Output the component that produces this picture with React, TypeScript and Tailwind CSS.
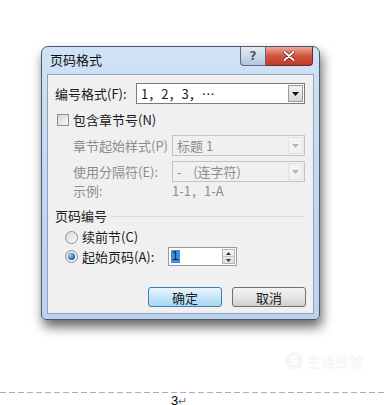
import React from "react";

const cjk = { fontFamily: '"Noto Sans CJK SC", "Noto Sans", sans-serif' };

function DropArrow({ disabled }: { disabled?: boolean }) {
  return (
    <div
      className={
        "ml-auto mr-[1px] flex h-[17px] w-[15px] items-center justify-center border " +
        (disabled
          ? "border-[#e3e3e3] bg-[#f3f3f3]"
          : "border-[#9a9a9a] bg-gradient-to-b from-[#f4f4f4] to-[#d6d6d6]")
      }
    >
      <svg width="7" height="4" viewBox="0 0 7 4">
        <path d="M0 0h7L3.5 4z" fill={disabled ? "#b5b5b5" : "#111"} />
      </svg>
    </div>
  );
}

function Radio({ checked }: { checked?: boolean }) {
  return (
    <div className="flex h-[13px] w-[13px] items-center justify-center rounded-full border border-[#8e8f8f] bg-gradient-to-br from-[#d8d8d8] to-[#fbfbfb]">
      {checked && (
        <div className="h-[7px] w-[7px] rounded-full bg-[radial-gradient(circle_at_35%_35%,#9fd0f7,#1d5ea8_70%)]" />
      )}
    </div>
  );
}

export default function App() {
  return (
    <div
      className="relative h-[405px] w-[385px] overflow-hidden bg-white text-[13px] text-[#1a1a1a]"
      style={cjk}
    >
      <div className="pl-[41px] pt-[46px]">
        {/* dialog frame */}
        <div className="h-[274px] w-[279px] rounded-t-[7px] rounded-b-[5px] border border-[#4d5a6a] bg-gradient-to-b from-[#cfe2f6] via-[#c3d8f0] to-[#bcd3ee] shadow-[2px_7px_12px_rgba(0,0,0,0.6)]">
          {/* title bar */}
          <div className="flex h-[27px] items-start">
            <span className="pl-[8px] pt-[5px] text-[13px] leading-[16px] text-[#111]">页码格式</span>
            <div className="ml-auto mr-[6px] flex">
              <div className="flex h-[19px] w-[26px] items-center justify-center rounded-bl-[4px] border border-t-0 border-[#5a6a80] bg-gradient-to-b from-[#e4ecf5] to-[#b3c6dc] text-[12px] font-bold leading-none text-[#4a5a70]" style={{ fontFamily: '"DejaVu Sans", sans-serif' }}>
                ?
              </div>
              <div className="flex h-[19px] w-[47px] items-center justify-center rounded-br-[4px] border border-l-0 border-t-0 border-[#6b2a22] bg-gradient-to-b from-[#e9a899] via-[#d2533f] to-[#c23a26]">
                <svg width="12" height="10" viewBox="0 0 12 10">
                  <path d="M1.5 1 10.5 9M10.5 1 1.5 9" stroke="#5a1a12" strokeWidth="3.4" strokeLinecap="round" />
                  <path d="M1.5 1 10.5 9M10.5 1 1.5 9" stroke="#fff" strokeWidth="2" strokeLinecap="round" />
                </svg>
              </div>
            </div>
          </div>

          {/* client panel */}
          <div className="mx-[5px] h-[240px] border border-[#8ea3bd] bg-[#f0f0f0] px-[7px] pt-[8px] leading-[16px]">
            {/* number format */}
            <div className="flex h-[21px] items-center">
              <span className="w-[81px]">编号格式(F):</span>
              <div className="flex h-[21px] w-[169px] items-center border border-[#7b7b7b] bg-white pl-[4px]">
                <span>1，2，3，…</span>
                <DropArrow />
              </div>
            </div>

            {/* include chapter */}
            <div className="mt-[9px] flex h-[13px] items-center pl-[2px]">
              <div className="h-[12px] w-[12px] border border-[#8e8f8f] bg-gradient-to-br from-[#d4d4d4] to-[#f7f7f7]" />
              <span className="ml-[4px]">包含章节号(N)</span>
            </div>

            {/* chapter style */}
            <div className="mt-[9px] flex h-[21px] items-center pl-[18px] text-[#8d8d8d]">
              <span className="w-[99px]">章节起始样式(P)</span>
              <div className="flex h-[21px] w-[133px] items-center border border-[#c4c4c4] bg-[#f0f0f0] pl-[4px]">
                <span>标题 1</span>
                <DropArrow disabled />
              </div>
            </div>

            {/* separator */}
            <div className="mt-[5px] flex h-[21px] items-center pl-[18px] text-[#8d8d8d]">
              <span className="w-[99px]">使用分隔符(E):</span>
              <div className="flex h-[21px] w-[133px] items-center border border-[#c4c4c4] bg-[#f0f0f0] pl-[4px]">
                <span className="whitespace-pre">-    (连字符)</span>
                <DropArrow disabled />
              </div>
            </div>

            {/* example */}
            <div className="mt-[2px] flex h-[14px] items-center pl-[18px] text-[#8d8d8d]">
              <span className="w-[99px]">示例:</span>
              <span>1-1，1-A</span>
            </div>

            {/* group header */}
            <div className="mt-[11px] flex h-[14px] items-center">
              <span>页码编号</span>
              <div className="ml-[4px] mr-[1px] h-px flex-1 bg-[#dcdcdc]" />
            </div>

            {/* continue */}
            <div className="mt-[6px] flex h-[16px] items-center pl-[10px]">
              <Radio />
              <span className="ml-[4px]">续前节(C)</span>
            </div>

            {/* start at */}
            <div className="mt-[2px] flex h-[19px] items-center pl-[10px]">
              <Radio checked />
              <span className="ml-[4px] w-[86px]">起始页码(A):</span>
              <div className="flex h-[19px] w-[69px] items-center border border-[#9a9a9a] bg-white pl-[2px]">
                <span className="bg-[#3f8ee6] px-[1px] text-[12px] leading-[13px] text-[#0b1c3c]" style={{ fontFamily: '"Liberation Sans", sans-serif' }}>
                  1
                </span>
                <div className="ml-auto mr-[1px] flex h-[15px] w-[13px] flex-col border border-[#b5b5b5] bg-gradient-to-b from-[#f7f7f7] to-[#dcdcdc]">
                  <div className="flex h-[7px] items-center justify-center border-b border-[#c8c8c8]">
                    <svg width="5" height="3" viewBox="0 0 5 3">
                      <path d="M0 3h5L2.5 0z" fill="#333" />
                    </svg>
                  </div>
                  <div className="flex flex-1 items-center justify-center">
                    <svg width="5" height="3" viewBox="0 0 5 3">
                      <path d="M0 0h5L2.5 3z" fill="#333" />
                    </svg>
                  </div>
                </div>
              </div>
            </div>

            {/* buttons */}
            <div className="mt-[21px] flex justify-end gap-[10px]">
              <button className="flex h-[20px] w-[74px] items-center justify-center rounded-[3px] border border-[#3c7fb1] bg-gradient-to-b from-[#eaf6fd] via-[#c6e6f9] to-[#a7d8f4] text-[13px] leading-none">
                确定
              </button>
              <button className="flex h-[20px] w-[74px] items-center justify-center rounded-[3px] border border-[#707070] bg-gradient-to-b from-[#f4f4f4] via-[#e6e6e6] to-[#cfcfcf] text-[13px] leading-none">
                取消
              </button>
            </div>
          </div>
        </div>
      </div>

      {/* watermark */}
      <div className="ml-[285px] mt-[26px] flex h-[30px] items-center gap-[4px] text-[#f6f6f6]">
        <span className="flex h-[18px] w-[18px] items-center justify-center rounded-full bg-[#f6f6f6] text-[12px] font-bold text-white" style={{ fontFamily: '"Liberation Sans", sans-serif' }}>
          S
        </span>
        <span className="text-[14px] font-bold">生活经验</span>
      </div>

      {/* page footer */}
      <div className="mt-[16px] h-px w-full bg-[repeating-linear-gradient(90deg,#9fb0d2_0_6px,transparent_6px_9px)]" />
      <div className="ml-[171px] mt-[1px] flex items-center text-[13px] leading-[14px] text-black" style={{ fontFamily: '"Liberation Sans", sans-serif' }}>
        3<span className="text-[11px] text-[#777]">↵</span>
      </div>
    </div>
  );
}
